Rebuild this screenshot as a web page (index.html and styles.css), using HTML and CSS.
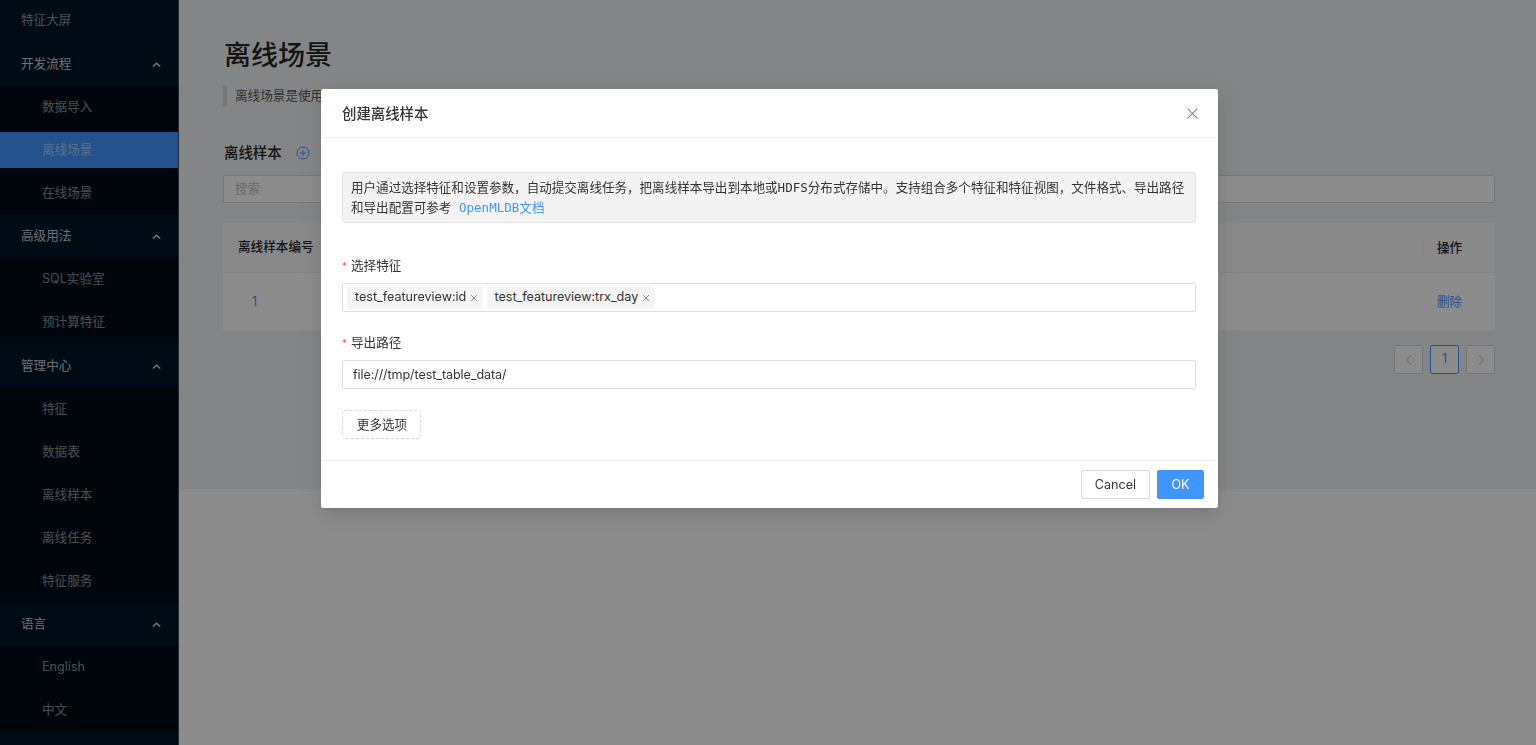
FILE: index.html
```html
<!DOCTYPE html>
<html lang="zh-CN">
<head>
<meta charset="utf-8">
<title>离线场景</title>
<link rel="stylesheet" href="styles.css">
</head>
<body>
<div class="layout">
  <aside class="sider">
    <nav class="menu">
      <a class="item top first">特征大屏</a>
      <div class="group-title">开发流程<svg class="chev" viewBox="0 0 10 6"><path d="M1 5 5 1.3 9 5"/></svg></div>
      <div class="sub">
        <a class="item">数据导入</a>
        <a class="item active">离线场景</a>
        <a class="item">在线场景</a>
      </div>
      <div class="group-title">高级用法<svg class="chev" viewBox="0 0 10 6"><path d="M1 5 5 1.3 9 5"/></svg></div>
      <div class="sub">
        <a class="item">SQL实验室</a>
        <a class="item">预计算特征</a>
      </div>
      <div class="group-title">管理中心<svg class="chev" viewBox="0 0 10 6"><path d="M1 5 5 1.3 9 5"/></svg></div>
      <div class="sub">
        <a class="item">特征</a>
        <a class="item">数据表</a>
        <a class="item">离线样本</a>
        <a class="item">离线任务</a>
        <a class="item">特征服务</a>
      </div>
      <div class="group-title">语言<svg class="chev" viewBox="0 0 10 6"><path d="M1 5 5 1.3 9 5"/></svg></div>
      <div class="sub">
        <a class="item">English</a>
        <a class="item">中文</a>
      </div>
    </nav>
  </aside>
  <main class="main">
    <div class="content">
      <h1 class="page-title">离线场景</h1>
      <p class="page-desc">离线场景是使用特征进行模型训练的场景</p>
      <div class="section-head">
        <h2 class="section-title">离线样本</h2>
        <svg class="add-icon" viewBox="0 0 14 14"><circle cx="7" cy="7" r="6"/><path d="M7 4v6M4 7h6"/></svg>
      </div>
      <div class="search">搜索</div>
      <div class="table">
        <div class="tr thead">
          <div class="td c-id">离线样本编号</div>
          <div class="td c-op">操作</div>
        </div>
        <div class="tr tbody">
          <div class="td c-id link num">1</div>
          <div class="td c-op link">删除</div>
        </div>
      </div>
      <div class="pager">
        <span class="page off"><svg viewBox="0 0 8 12"><path d="M6.5 1 1.5 6l5 5"/></svg></span>
        <span class="page cur">1</span>
        <span class="page off"><svg viewBox="0 0 8 12"><path d="M1.5 1l5 5-5 5"/></svg></span>
      </div>
    </div>
  </main>
</div>
<div class="mask"></div>
<section class="modal">
  <header class="modal-head">
    <h3 class="modal-title">创建离线样本</h3>
    <svg class="close" viewBox="0 0 12 12"><path d="M.7.7l10.6 10.6M11.3.7.7 11.3"/></svg>
  </header>
  <div class="modal-body">
    <div class="alert">用户通过选择特征和设置参数，自动提交离线任务，把离线样本导出到本地或HDFS分布式存储中。支持组合多个特征和特征视图，文件格式、导出路径和导出配置可参考 <a class="doc-link">OpenMLDB文档</a></div>
    <div class="field first-field">
      <label class="label"><span class="req">*</span>选择特征</label>
      <div class="select">
        <span class="tag tag-a">test_featureview:id<svg class="tag-x" viewBox="0 0 8 8"><path d="M1 1l6 6M7 1 1 7"/></svg></span>
        <span class="tag tag-b">test_featureview:trx_day<svg class="tag-x" viewBox="0 0 8 8"><path d="M1 1l6 6M7 1 1 7"/></svg></span>
      </div>
    </div>
    <div class="field">
      <label class="label"><span class="req">*</span>导出路径</label>
      <div class="input">file:///tmp/test_table_data/</div>
    </div>
    <button class="more">更多选项</button>
  </div>
  <footer class="modal-foot">
    <button class="btn btn-cancel">Cancel</button>
    <button class="btn primary">OK</button>
  </footer>
</section>
</body>
</html>
```
FILE: styles.css
```css
* { box-sizing: border-box; }
html, body { margin: 0; height: 100%; overflow: hidden; }
body {
  background: #fff;
  color: #333;
  font: 12.6px/1.5 Inter, "Noto Sans CJK SC", sans-serif;
}
.layout { display: flex; height: 745px; }
.sider { width: 179px; flex: none; background: #001529; border-right: 1px solid #3a4a58; }
.menu { display: flex; flex-direction: column; }
.item {
  display: flex; align-items: center;
  height: 36px; margin: 3.56px 0; padding: 1.5px 0 0 42px;
  color: rgba(255,255,255,.55);
}
.item.top { padding-left: 21px; height: 36px; margin: 0 0 4px; }
.item.first { margin-top: 2px; }
.active { background: #4096ff; color: rgba(255,255,255,.55); }
.group-title {
  position: relative;
  display: flex; align-items: center;
  height: 43.1px; padding: 1.5px 0 0 21px;
  color: rgba(255,255,255,.8);
}
.chev { position: absolute; right: 17px; top: 20px; width: 9px; height: 5.4px; fill: none; stroke: rgba(255,255,255,.85); stroke-width: 1.6; }
.sub { display: flex; flex-direction: column; background: #000c17; }
.main { flex: 1; min-width: 0; }
.content { background: #f0f2f5; height: 489px; padding: 37px 41px 0 44px; }
.page-title { margin: 0; padding-left: 1px; font-size: 27px; line-height: 37px; font-weight: 500; color: #262626; }
.page-desc {
  margin: 12px 0 0; height: 20px; line-height: 20px;
  border-left: 4px solid #d9d9d9; padding-left: 8px;
  color: #595959;
}
.section-head { display: flex; align-items: center; gap: 14px; margin-top: 36px; height: 21px; padding-left: 1px; }
.section-title { margin: 0; font-size: 14.4px; font-weight: 500; color: #262626; }
.add-icon { width: 14px; height: 14px; fill: none; stroke: #4096ff; stroke-width: 1; }
.search {
  margin-top: 12px; height: 28px; line-height: 26px; padding: 0 11px;
  background: #fff; border: 1px solid #d9d9d9; border-radius: 2px;
  color: #bfbfbf;
}
.table { margin-top: 20px; background: #fff; }
.tr { display: flex; justify-content: space-between; align-items: center; }
.thead { height: 50px; background: #fafafa; border-bottom: 1px solid #f0f0f0; font-weight: 500; color: #262626; }
.tbody { height: 57px; padding-top: 2px; }
.c-id { padding-left: 15px; }
.c-op { width: 73px; padding-left: 14px; }
.tbody .c-op { padding-left: 15px; }
.thead .c-op { border-left: 1px solid #f0f0f0; line-height: 20px; }
.link { color: #4096ff; }
.num { padding-left: 29px; }
.pager { display: flex; justify-content: flex-end; gap: 7px; margin-top: 15px; }
.page {
  display: flex; align-items: center; justify-content: center;
  width: 29px; height: 29px; border: 1px solid #d9d9d9; border-radius: 2px;
  background: #fff; color: #4096ff;
}
.page svg { width: 8px; height: 12px; fill: none; stroke: #bfbfbf; stroke-width: 1; }
.page.cur { border-color: #4096ff; }
.mask { position: fixed; inset: 0; background: rgba(0,0,0,.45); }
.modal {
  position: fixed; left: 321px; top: 89px; width: 897px; height: 419px;
  display: flex; flex-direction: column;
  background: #fff; border-radius: 2px;
  box-shadow: 0 3px 6px -4px rgba(0,0,0,.12), 0 6px 16px rgba(0,0,0,.08), 0 9px 28px 8px rgba(0,0,0,.05);
}
.modal-head {
  display: flex; align-items: center; justify-content: space-between;
  height: 49px; flex: none; padding: 1px 20px 0 21px;
  border-bottom: 1px solid #f0f0f0;
}
.modal-title { margin: 0; font-size: 14.4px; font-weight: 500; color: #333; }
.close { width: 11px; height: 11px; fill: none; stroke: #808080; stroke-width: 1.1; }
.modal-body { flex: 1; padding: 34px 22px 0 21px; }
.alert {
  height: 51px; padding: 5px 6px 5px 8px;
  background: #f3f3f3; border: 1px solid #e3e3e3; border-radius: 3px;
  font-family: "DejaVu Sans Mono", "Noto Sans CJK SC", monospace;
  font-size: 12.55px;
  line-height: 20px; color: #333;
}
.doc-link { color: #4096ff; }
.field { margin-top: 21px; }
.first-field { margin-top: 33px; }
.label { display: flex; align-items: center; height: 21px; margin-bottom: 6px; color: #333; }
.req { width: 9px; color: #ff4d4f; font-size: 10px; }
.select {
  display: flex; align-items: center; gap: 4px;
  height: 29px; padding: 0 4px;
  border: 1px solid #dedede; border-radius: 2px;
}
.tag {
  display: flex; align-items: center; justify-content: space-between;
  height: 22px; padding: 0 5px 0 8px;
  background: #f5f5f5; border-radius: 2px; color: #333;
  letter-spacing: -.03px;
}
.tag-a { width: 136px; }
.tag-b { width: 168px; padding-left: 7.5px; }
.tag-x { width: 8px; height: 8px; fill: none; stroke: #8c8c8c; stroke-width: 1; }
.input {
  height: 29px; padding: 0 10px; line-height: 27px;
  border: 1px solid #dedede; border-radius: 2px; color: #333;
  letter-spacing: -.1px;
}
.more {
  display: block; margin-top: 21px; width: 79px; height: 29px; padding: 2px 0 0 1px;
  background: #fff; border: 1px dashed #d9d9d9; border-radius: 2px;
  font: inherit; color: #333;
}
.modal-foot {
  display: flex; justify-content: flex-end; gap: 7px;
  height: 48px; flex: none; padding: 9px 14px 0 0;
  border-top: 1px solid #f0f0f0;
}
.btn {
  width: 47px; height: 29px; padding: 2px 0 0;
  background: #fff; border: 1px solid #d9d9d9; border-radius: 2px;
  font: inherit; color: #333;
}
.btn-cancel { width: 69px; }
.primary { background: #4096ff; border-color: #4096ff; color: #fff; }
```
